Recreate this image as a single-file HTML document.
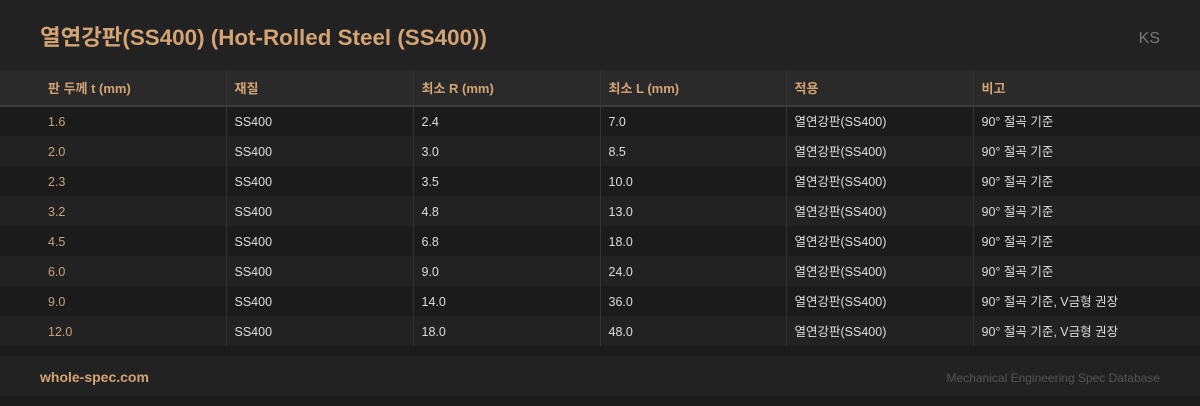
<!DOCTYPE html>
<html><head><meta charset="utf-8"><style>
*{margin:0;padding:0;box-sizing:border-box}
body{width:1200px;height:406px;background:#1b1b1b;font-family:"Liberation Sans","Noto Sans CJK KR",sans-serif;overflow:hidden;position:relative}
.hdr{position:absolute;left:0;top:0;width:1200px;height:70px;background:#222}
.hdr h1{position:absolute;left:40px;top:23px;font-size:22.4px;line-height:30px;font-weight:bold;color:#d4a373;white-space:nowrap}
.hdr .ks{position:absolute;right:40px;top:30px;font-size:16px;color:#777}
table{position:absolute;top:70px;left:0;border-collapse:collapse;width:1200px;table-layout:fixed}
th{height:36px;background:#2a2a2a;color:#d4a373;font-size:13px;line-height:16px;font-weight:bold;text-align:left;padding-left:8px;padding-top:3px;border-bottom:2px solid #3a3a3a;border-left:1px solid #333}
td{height:30px;font-size:12.5px;line-height:16px;color:#ddd;padding-left:8px;border-left:1px solid #333;padding-top:1px;vertical-align:middle}
th:first-child,td:first-child{padding-left:48px;border-left:none}
td:first-child{color:#c9a27a}
tr.o td{background:#1b1b1b}
tr.e td{background:#222}
.ft{position:absolute;left:0;top:356px;width:1200px;height:40px;background:#222}
.ft .l{position:absolute;left:40px;top:13px;font-size:14px;font-weight:bold;color:#d4a373}
.ft .r{position:absolute;right:40px;top:15px;font-size:12px;color:#555}
</style></head><body>
<div class="hdr"><h1>열연강판(SS400) (Hot-Rolled Steel (SS400))</h1><div class="ks">KS</div></div>
<table>
<colgroup><col style="width:226px"><col style="width:187px"><col style="width:187px"><col style="width:186px"><col style="width:187px"><col style="width:227px"></colgroup>
<tr><th>판 두께 t (mm)</th><th>재질</th><th>최소 R (mm)</th><th>최소 L (mm)</th><th>적용</th><th>비고</th></tr>
<tr class="o"><td>1.6</td><td>SS400</td><td>2.4</td><td>7.0</td><td>열연강판(SS400)</td><td>90° 절곡 기준</td></tr>
<tr class="e"><td>2.0</td><td>SS400</td><td>3.0</td><td>8.5</td><td>열연강판(SS400)</td><td>90° 절곡 기준</td></tr>
<tr class="o"><td>2.3</td><td>SS400</td><td>3.5</td><td>10.0</td><td>열연강판(SS400)</td><td>90° 절곡 기준</td></tr>
<tr class="e"><td>3.2</td><td>SS400</td><td>4.8</td><td>13.0</td><td>열연강판(SS400)</td><td>90° 절곡 기준</td></tr>
<tr class="o"><td>4.5</td><td>SS400</td><td>6.8</td><td>18.0</td><td>열연강판(SS400)</td><td>90° 절곡 기준</td></tr>
<tr class="e"><td>6.0</td><td>SS400</td><td>9.0</td><td>24.0</td><td>열연강판(SS400)</td><td>90° 절곡 기준</td></tr>
<tr class="o"><td>9.0</td><td>SS400</td><td>14.0</td><td>36.0</td><td>열연강판(SS400)</td><td>90° 절곡 기준, V금형 권장</td></tr>
<tr class="e"><td>12.0</td><td>SS400</td><td>18.0</td><td>48.0</td><td>열연강판(SS400)</td><td>90° 절곡 기준, V금형 권장</td></tr>
</table>
<div class="ft"><div class="l">whole-spec.com</div><div class="r">Mechanical Engineering Spec Database</div></div>
</body></html>
